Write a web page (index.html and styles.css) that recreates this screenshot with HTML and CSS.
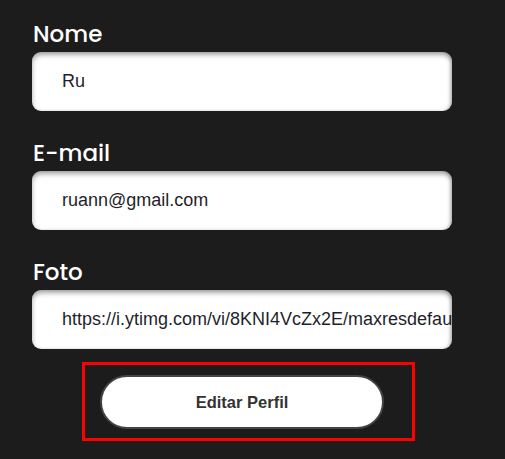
FILE: index.html
```html
<!DOCTYPE html>
<html lang="pt">
<head>
<meta charset="utf-8">
<link rel="stylesheet" href="styles.css">
</head>
<body>
<form class="form">
  <div class="field">
    <label class="label">Nome</label>
    <div class="input">Ru</div>
  </div>
  <div class="field">
    <label class="label">E-mail</label>
    <div class="input">ruann@gmail.com</div>
  </div>
  <div class="field field-last">
    <label class="label">Foto</label>
    <div class="input">https://i.ytimg.com/vi/8KNI4VcZx2E/maxresdefault.jpg</div>
  </div>
  <div class="actions">
    <div class="highlight">
      <button type="button" class="btn">Editar Perfil</button>
    </div>
  </div>
</form>
</body>
</html>
```
FILE: styles.css
```css
html, body {
  margin: 0;
  padding: 0;
  background: #1c1c1c;
}
.form {
  width: 420px;
  margin-left: 32px;
  padding-top: 19px;
  display: flex;
  flex-direction: column;
}
.field {
  display: flex;
  flex-direction: column;
  margin-bottom: 27px;
}
.field-last {
  margin-bottom: 13px;
}
.label {
  font-family: "Poppins", "Inter", "Noto Sans", sans-serif;
  font-weight: 500;
  font-size: 23px;
  line-height: 30px;
  color: #ffffff;
  margin-left: 1px;
  margin-bottom: 3px;
}
.input {
  height: 59px;
  box-sizing: border-box;
  background: #ffffff;
  border-radius: 9px;
  padding-left: 30px;
  font-family: "Liberation Sans", Arial, sans-serif;
  font-size: 18px;
  color: #1f1f2b;
  display: flex;
  align-items: center;
  white-space: nowrap;
  overflow: hidden;
  box-shadow: inset 0 3px 5px rgba(0, 0, 0, 0.35), inset -2px 0 3px rgba(0, 0, 0, 0.15);
}
.actions {
  display: flex;
}
.highlight {
  margin-left: 50px;
  width: 333px;
  height: 79px;
  box-sizing: border-box;
  border: 3px solid #ff0000;
  padding: 10px 0 0 15px;
}
.btn {
  width: 284px;
  height: 54px;
  box-sizing: border-box;
  border: 2px solid #444444;
  border-radius: 27px;
  background: #ffffff;
  font-family: "Liberation Sans", Arial, sans-serif;
  font-weight: bold;
  font-size: 16.5px;
  color: #333333;
  padding: 0;
  cursor: pointer;
}
```
